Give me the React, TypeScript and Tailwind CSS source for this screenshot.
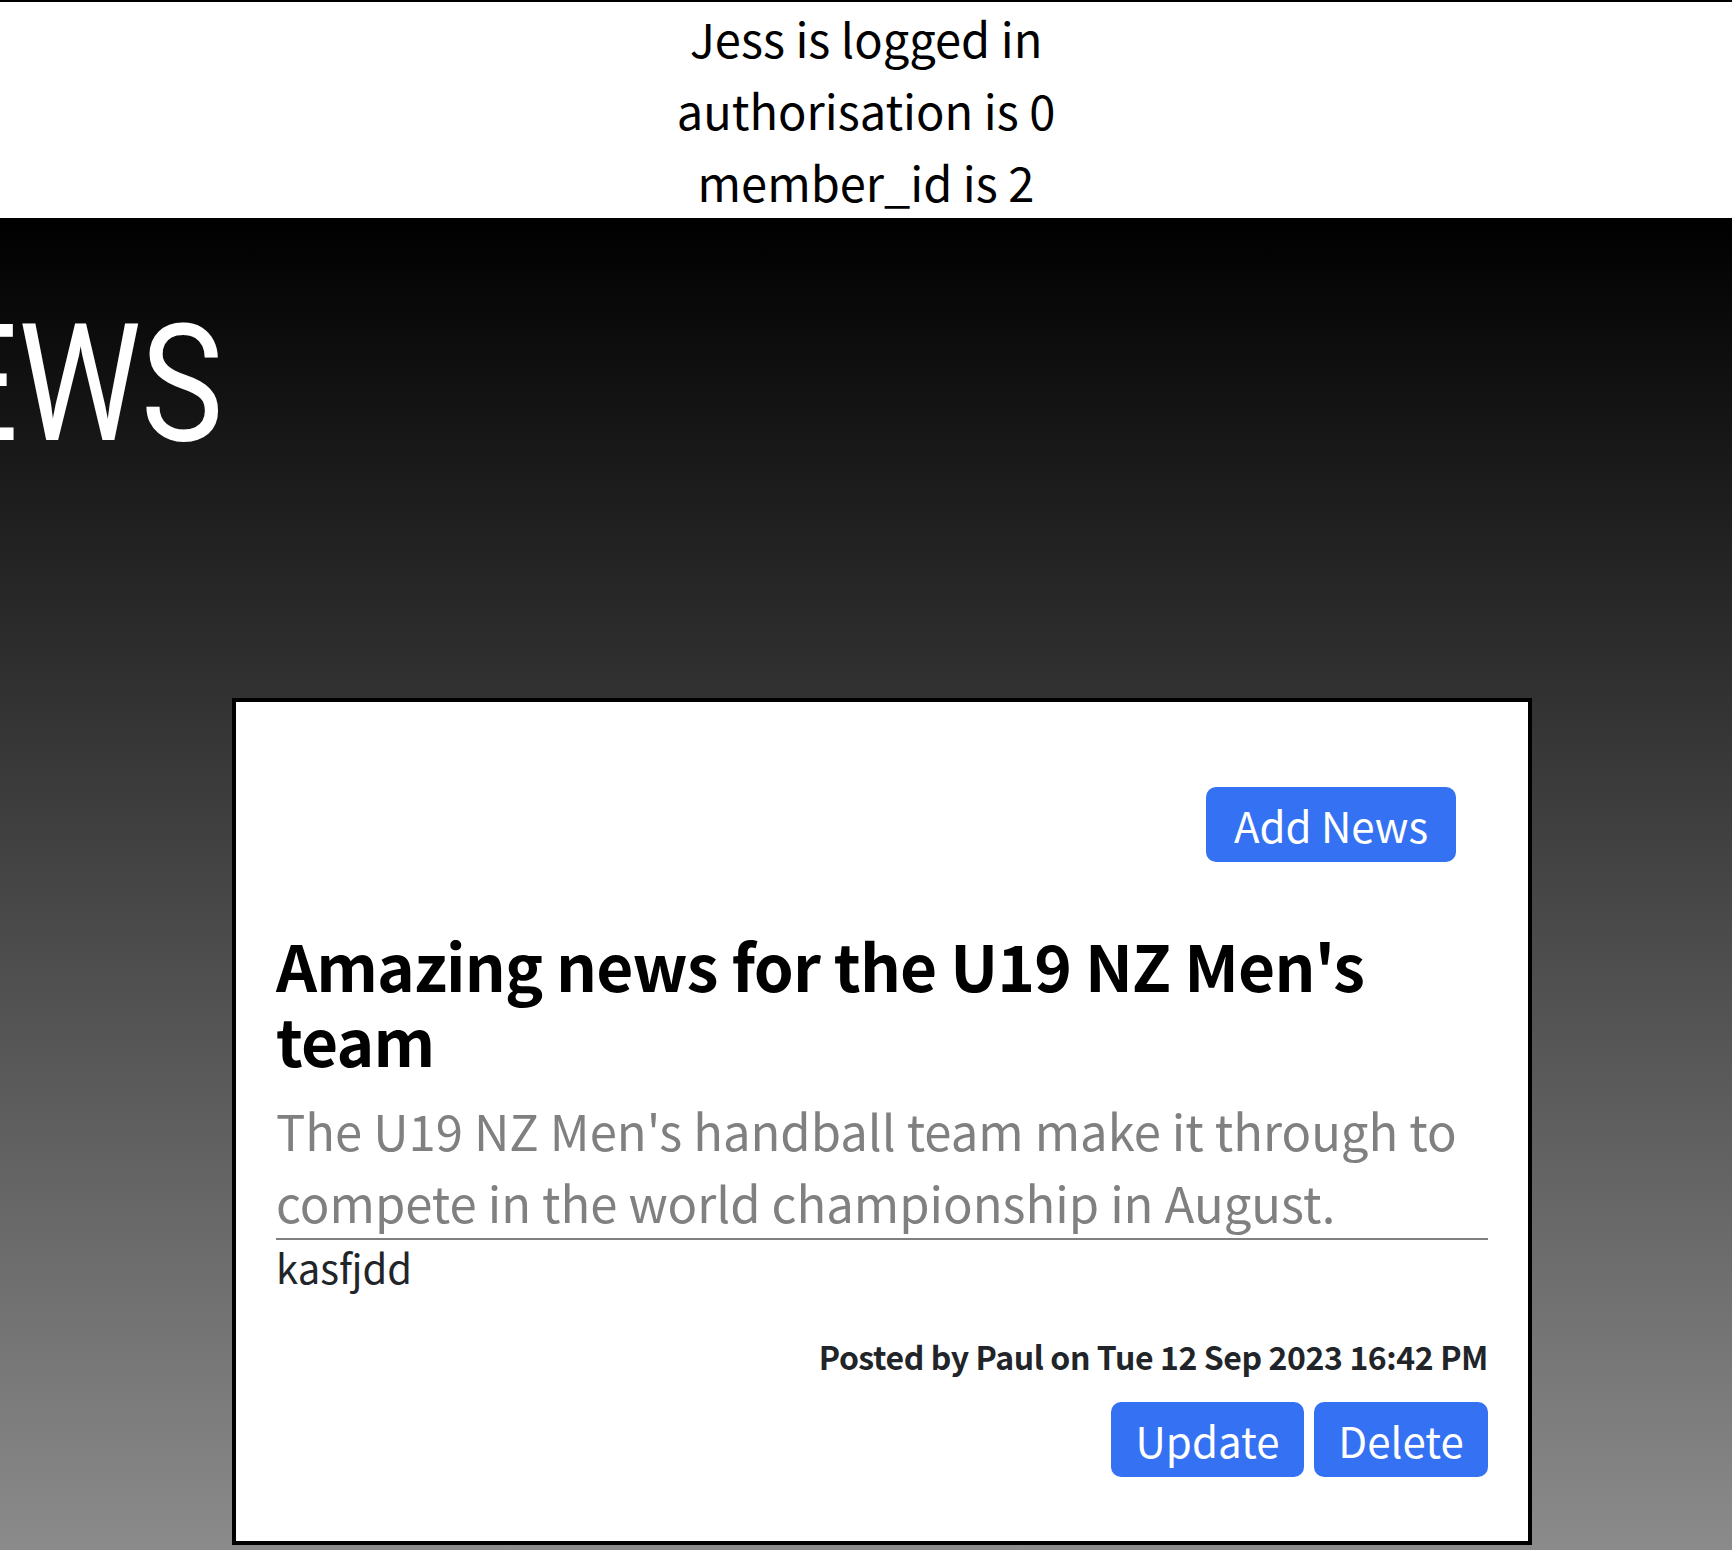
export default function App() {
  return (
    <div className="min-h-[1550px] font-['Noto_Sans_CJK_KR','Noto_Sans',sans-serif]">
      {/* session debug info */}
      <div className="border-t-2 border-black bg-white text-center text-[47px] leading-[72px] text-black">
        <p>Jess is logged in</p>
        <p>authorisation is 0</p>
        <p>member_id is 2</p>
      </div>

      <section className="h-[1332px] overflow-hidden bg-linear-to-b/srgb from-black to-[#8b8b8b]">
        <div className="flex w-[223px] justify-end pt-[85px]">
          <h1 className="origin-right scale-x-[0.85] whitespace-nowrap font-['Roboto',sans-serif] text-[163px] leading-none text-white">
            NEWS
          </h1>
        </div>

        {/* News card */}
        <div className="ml-[232px] mt-[232px] w-[1300px] border-4 border-black bg-white px-[40px] pb-[64px] pt-[85px]">
          <div className="flex justify-end pr-[32px]">
            <button className="flex h-[75px] w-[250px] items-center justify-center rounded-[10px] bg-[#3571f3] text-[42px] text-white">
              Add News
            </button>
          </div>

          <h2 className="mt-[65px] text-[64px] font-bold leading-[75px] tracking-[-0.8px] text-black">
            Amazing news for the U19 NZ Men's team
          </h2>
          <p className="mt-[17px] border-b-2 border-[#808080] text-[49px] leading-[72px] text-[#808080]">
            The U19 NZ Men's handball team make it through to compete in the world championship in August.
          </p>
          <p className="text-[40px] leading-[54px] text-[#212529]">kasfjdd</p>

          <p className="mt-[36px] text-right text-[32px] font-semibold leading-[52px] tracking-[-0.4px] text-[#212529]">
            Posted by Paul on Tue 12 Sep 2023 16:42 PM
          </p>
          <div className="mt-[20px] flex justify-end gap-[10px]">
            <button className="flex h-[75px] w-[193px] items-center justify-center rounded-[10px] bg-[#3571f3] text-[42px] text-white">
              Update
            </button>
            <button className="flex h-[75px] w-[174px] items-center justify-center rounded-[10px] bg-[#3571f3] text-[42px] text-white">
              Delete
            </button>
          </div>
        </div>
      </section>
    </div>
  );
}
